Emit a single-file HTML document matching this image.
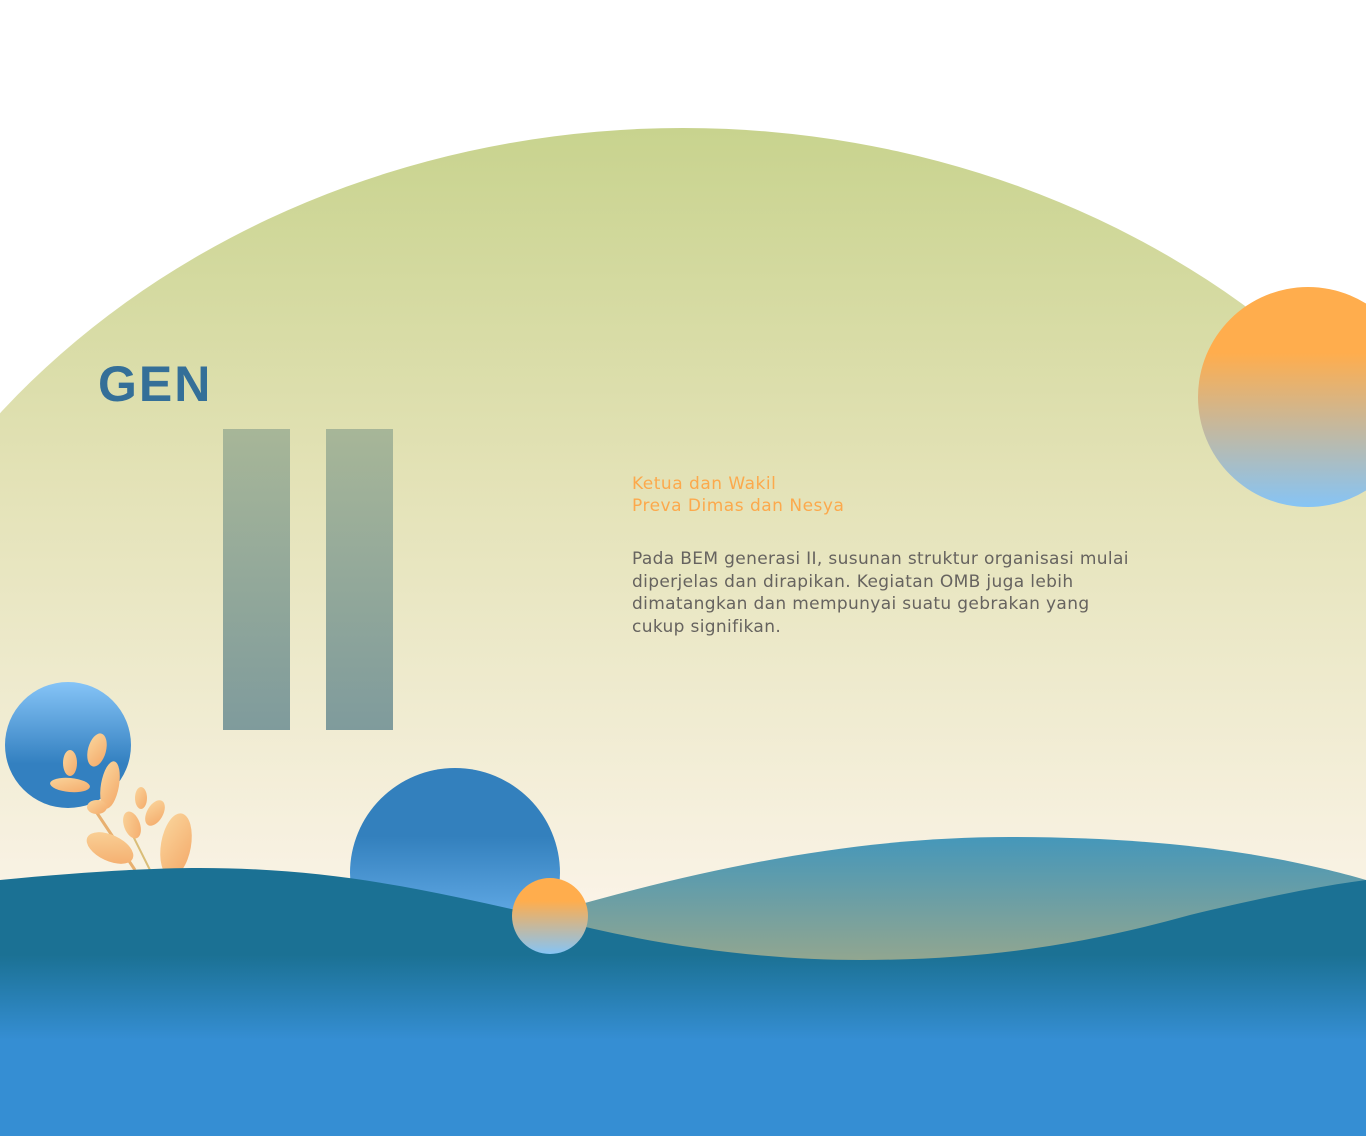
<!DOCTYPE html>
<html><head><meta charset="utf-8"><style>
html,body{margin:0;padding:0;background:#fff;}
html{width:1366px;height:1136px;overflow:hidden;}
body{width:1366px;height:1136px;overflow:hidden;position:relative;}
svg{position:absolute;left:0;top:0;display:block;}
.t{position:absolute;font-family:"Liberation Sans",sans-serif;}
.d{font-family:"DejaVu Sans","Liberation Sans",sans-serif;}
</style></head><body>
<svg width="1366" height="1136" viewBox="0 0 1366 1136">
<defs>
<linearGradient id="bg" x1="0" y1="128" x2="0" y2="900" gradientUnits="userSpaceOnUse">
<stop offset="0" stop-color="#c8d38e"/><stop offset="0.45" stop-color="#e3e2b6"/><stop offset="1" stop-color="#faf3e6"/></linearGradient>
<linearGradient id="bar" x1="0" y1="429" x2="0" y2="730" gradientUnits="userSpaceOnUse">
<stop offset="0" stop-color="#a7b698"/><stop offset="1" stop-color="#7f9b9c"/></linearGradient>
<linearGradient id="or" x1="0" y1="0" x2="0" y2="1">
<stop offset="0.3" stop-color="#ffad4d"/><stop offset="1" stop-color="#86c4f5"/></linearGradient>
<linearGradient id="bl" x1="0" y1="0" x2="0" y2="1">
<stop offset="0" stop-color="#86c4f7"/><stop offset="0.65" stop-color="#3380c0"/></linearGradient>
<linearGradient id="bb" x1="0" y1="768" x2="0" y2="920" gradientUnits="userSpaceOnUse">
<stop offset="0.45" stop-color="#3380bd"/><stop offset="1" stop-color="#62aae6"/></linearGradient>
<linearGradient id="back" x1="0" y1="837" x2="0" y2="960" gradientUnits="userSpaceOnUse">
<stop offset="0" stop-color="#4597ba"/><stop offset="1" stop-color="#91a690"/></linearGradient>
<linearGradient id="front" x1="0" y1="870" x2="0" y2="1040" gradientUnits="userSpaceOnUse">
<stop offset="0.5" stop-color="#1b7194"/><stop offset="1" stop-color="#358ed3"/></linearGradient>
<linearGradient id="leaf" x1="0" y1="0" x2="1" y2="1">
<stop offset="0" stop-color="#fad59c"/><stop offset="1" stop-color="#f4aa6a"/></linearGradient>
</defs>
<ellipse cx="683" cy="900" rx="880" ry="772" fill="url(#bg)"/>
<rect x="223" y="429" width="67" height="301" fill="url(#bar)"/>
<rect x="326" y="429" width="67" height="301" fill="url(#bar)"/>
<circle cx="1308" cy="397" r="110" fill="url(#or)"/>
<circle cx="68" cy="745" r="63" fill="url(#bl)"/>
<g fill="url(#leaf)">
<path d="M95 810 L135 870" stroke="#e8b070" stroke-width="3" fill="none"/>
<path d="M125 820 L150 870" stroke="#d9bd78" stroke-width="2" fill="none"/>
<ellipse cx="70" cy="763" rx="7" ry="13"/>
<ellipse cx="97" cy="750" rx="9" ry="17" transform="rotate(15 97 750)"/>
<ellipse cx="110" cy="785" rx="9" ry="24" transform="rotate(10 110 785)"/>
<ellipse cx="70" cy="785" rx="20" ry="7" transform="rotate(5 70 785)"/>
<ellipse cx="97" cy="807" rx="10" ry="7"/>
<ellipse cx="141" cy="798" rx="6" ry="11"/>
<ellipse cx="155" cy="813" rx="8" ry="14" transform="rotate(30 155 813)"/>
<ellipse cx="132" cy="825" rx="8" ry="14" transform="rotate(-20 132 825)"/>
<ellipse cx="110" cy="848" rx="25" ry="13" transform="rotate(25 110 848)"/>
<ellipse cx="176" cy="845" rx="15" ry="32" transform="rotate(10 176 845)"/>
</g>
<circle cx="455" cy="873" r="105" fill="url(#bb)"/>
<path d="M560 910 C 700 870, 850 837, 1010 837 C 1180 837, 1290 858, 1366 880 L1366 1000 L560 1000 Z" fill="url(#back)"/>
<path d="M0 880 C 80 872, 150 868, 200 868 C 330 868, 430 890, 550 918 C 650 945, 760 960, 860 960 C 1000 960, 1100 940, 1190 915 C 1260 898, 1320 886, 1366 880 L1366 1136 L0 1136 Z" fill="url(#front)"/>
<circle cx="550" cy="916" r="38" fill="url(#or)"/>
</svg>
<div class="t" style="left:98px;top:355px;font-size:50px;font-weight:bold;color:#346f98;letter-spacing:2px;line-height:58px;">GEN</div>
<div class="t d" style="left:632px;top:473px;font-size:17px;line-height:22px;color:#fca94c;letter-spacing:0.5px;white-space:nowrap;">Ketua dan Wakil<br>Preva Dimas dan Nesya</div>
<div class="t d" style="left:632px;top:548px;font-size:17px;line-height:22.5px;color:#66635f;letter-spacing:0.35px;white-space:nowrap;">Pada BEM generasi II, susunan struktur organisasi mulai<br>diperjelas dan dirapikan. Kegiatan OMB juga lebih<br>dimatangkan dan mempunyai suatu gebrakan yang<br>cukup signifikan.</div>
</body></html>
